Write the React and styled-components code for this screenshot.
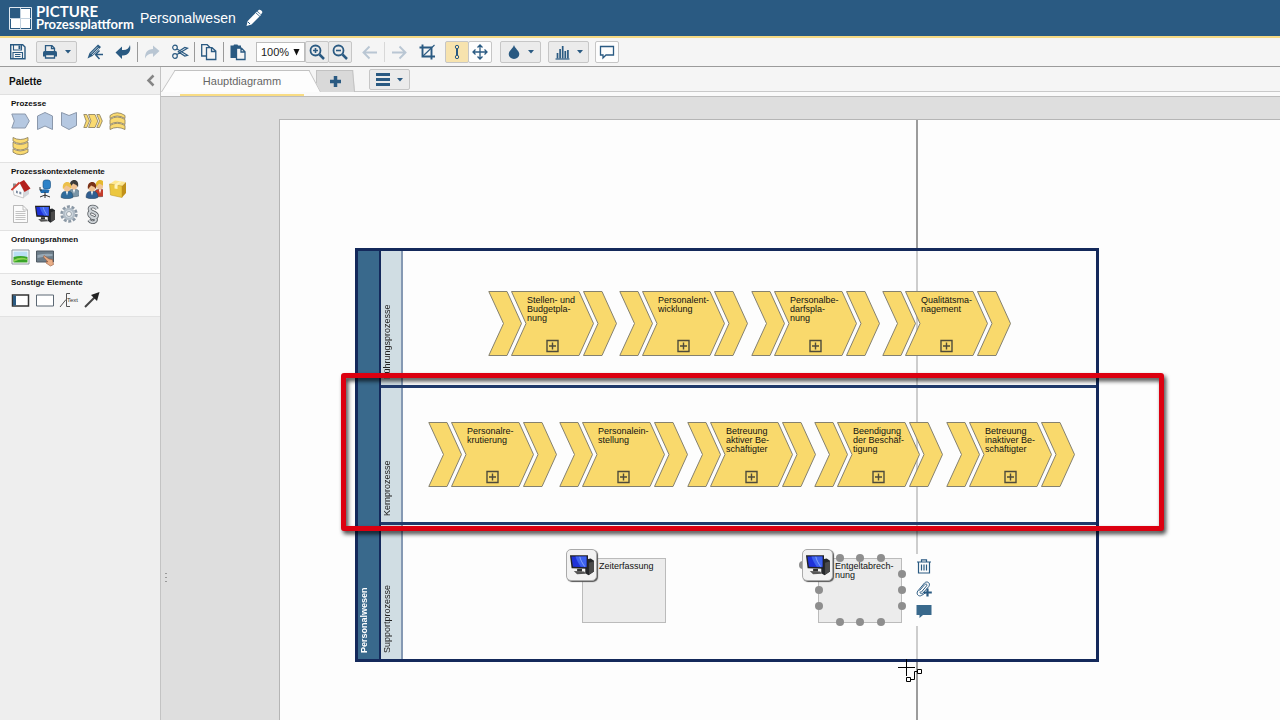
import React from "react";
import styled, { createGlobalStyle } from "styled-components";

const blue = "#2a5a82";
const navy = "#14295b";

const GlobalStyle = createGlobalStyle`
  * { box-sizing: border-box; }
  body { margin: 0; font-family: "Liberation Sans", Arial, sans-serif; color: #111; }
  button, select { font-family: inherit; }
`;

const Page = styled.div`
  display: flex;
  flex-direction: column;
  min-height: 100vh;
  overflow: hidden;
  background: #dedede;
`;

/* ---------- header ---------- */
const Header = styled.header`
  display: flex;
  align-items: center;
  height: 38px;
  padding: 0 9px;
  background: ${blue};
  border-bottom: 2px solid #f6da83;
  color: #fff;
`;
const Brand = styled.a`
  display: flex;
  align-items: center;
  gap: 4px;
  width: 131px;
  color: #fff;
  text-decoration: none;
  font-family: Lato, "Liberation Sans", sans-serif;
  font-weight: 700;
  white-space: nowrap;
`;
const BrandText = styled.span`
  display: flex;
  flex-direction: column;
`;
const BrandName = styled.span`
  font-size: 15px;
  line-height: 13px;
`;
const BrandSub = styled.span`
  font-size: 13px;
  line-height: 13px;
`;
const Title = styled.h1`
  margin: 0;
  font-size: 14px;
  line-height: 16px;
  font-weight: 400;
`;
const EditButton = styled.button`
  display: flex;
  margin-left: 8px;
  padding: 0;
  border: 0;
  background: none;
  color: #fff;
`;

/* ---------- toolbar ---------- */
const Toolbar = styled.nav`
  display: flex;
  align-items: center;
  gap: 4px;
  height: 29px;
  padding: 0 4px;
  background: #f5f5f5;
  border-bottom: 1px solid #9b9b9b;
`;
const Group = styled.div`
  display: flex;
  align-items: center;
`;
const WideGroup = styled(Group)`
  gap: 7px;
  margin-left: 4px;
`;
const ToolButton = styled.button`
  display: flex;
  align-items: center;
  justify-content: center;
  width: 28px;
  height: 22px;
  padding: 0;
  border: 0;
  background: none;
  color: ${(p) => (p.disabled ? "#b9c6d3" : blue)};
`;
const BoxButton = styled(ToolButton)`
  width: 24px;
  border: 1px solid #c6c6c6;
  border-radius: 2px;
  background: ${(p) => (p.$tone === "active" ? "#f7e3ae" : p.$tone === "light" ? "#fdfdfd" : "#ebebeb")};
  & + & { margin-left: -1px; }
`;
const DropButton = styled(BoxButton)`
  width: 41px;
  gap: 7px;
  & + & { margin-left: 0; }
`;
const Separator = styled.span`
  width: 1px;
  height: 20px;
  background: ${(p) => (p.$faint ? "#d8d8d8" : "#9a9a9a")};
`;
const ZoomLabel = styled.label`
  display: grid;
  align-items: center;
  width: 49px;
  height: 20px;
  border: 1px solid #bdbdbd;
  background: #fff;
  font-size: 11px;
  svg { grid-area: 1 / 1; justify-self: end; margin-right: 4px; pointer-events: none; }
`;
const ZoomSelect = styled.select`
  grid-area: 1 / 1;
  width: 100%;
  height: 18px;
  padding: 0 4px;
  border: 0;
  background: none;
  appearance: none;
  font-size: 11px;
  color: #222;
`;

/* ---------- body ---------- */
const Body = styled.div`
  display: flex;
  flex: 1;
`;
const Sidebar = styled.aside`
  flex: none;
  width: 161px;
  background: #eee;
  border-right: 1px solid #c3c3c3;
`;
const PaletteHeader = styled.div`
  display: flex;
  align-items: center;
  justify-content: space-between;
  height: 28px;
  padding: 0 5px 0 9px;
  border-bottom: 1px solid #e0e0e0;
  background: #f0f0f0;
`;
const PaletteTitle = styled.h2`
  margin: 0;
  padding-top: 2px;
  font-size: 10px;
  line-height: 12px;
`;
const PlainButton = styled.button`
  display: flex;
  align-items: center;
  justify-content: center;
  padding: 0;
  border: 0;
  background: none;
  color: ${blue};
`;
const Section = styled.section`
  padding: 5px 9px 4px;
  border-bottom: 1px solid #e2e2e2;
  background: ${(p) => (p.$shade ? "#f7f7f7" : "#fdfdfd")};
`;
const SectionTitle = styled.h3`
  margin: 0 2px;
  font-size: 8px;
  line-height: 8px;
`;
const IconGrid = styled.div`
  display: grid;
  grid-template-columns: repeat(5, 24px);
  grid-auto-rows: 25px;
`;

const Main = styled.main`
  display: flex;
  flex-direction: column;
  flex: 1;
  min-width: 0;
`;
const TabBar = styled.div`
  display: flex;
  height: 30px;
  padding-top: 3px;
  border-bottom: 1px solid #bcbcbc;
  background: linear-gradient(#f5f5f5 24px, #c9c9c9 24px, #c9c9c9 25px, #fafafa 25px);
`;
const Tab = styled.button`
  position: relative;
  z-index: 1;
  width: 160px;
  height: 26px;
  padding: 0 0 3px;
  border: 0;
  background: none;
  font-size: 11px;
  color: #666;
  &::before, &::after {
    content: "";
    position: absolute;
    z-index: -1;
    top: 0;
    bottom: 4px;
    width: 55%;
    border-top: 1px solid #c2c2c2;
    background: #fdfdfd;
  }
  &::before {
    left: 0;
    border-left: 1px solid #c2c2c2;
    transform: skewX(-32deg);
    transform-origin: bottom;
  }
  &::after {
    right: 0;
    border-right: 1px solid #c2c2c2;
    transform: skewX(28deg);
    transform-origin: bottom;
  }
`;
const TabLabel = styled.span`
  display: block;
  margin: 0 17px 0 19px;
  height: 26px;
  line-height: 23px;
  border-bottom: 2px solid #f8dc84;
`;
const AddTab = styled(Tab)`
  z-index: 0;
  display: flex;
  justify-content: center;
  align-items: center;
  width: 39px;
  height: 22px;
  margin-left: -5px;
  padding: 0;
  color: ${blue};
  &::before, &::after { background: #d9d9d9; bottom: 0; }
  &::before { transform: none; }
  &::after { transform: skewX(5deg); }
`;
const TabMenu = styled(DropButton)`
  height: 21px;
  margin: -1px 0 0 14px;
`;

const Canvas = styled.div`
  position: relative;
  display: flex;
  flex: 1;
  padding: 22px 0 0 118px;
  background: #dedede;
  overflow: hidden;
`;
const Splitter = styled.div`
  position: absolute;
  left: 4px;
  top: 476px;
  width: 2px;
  height: 12px;
  background: repeating-linear-gradient(#999 0 1px, transparent 1px 4px);
`;
const Sheet = styled.div`
  position: relative;
  flex: 1;
  min-height: 601px;
  border: solid #b5b5b5;
  border-width: 1px 0 0 1px;
  background: #fdfdfd;
`;
const Guide = styled.div`
  position: absolute;
  left: 636px;
  top: 0;
  bottom: 0;
  width: 2px;
  background: #9c9c9c;
`;
const Pool = styled.div`
  position: absolute;
  left: 75px;
  top: 128px;
  display: flex;
  width: 744px;
  height: 414px;
  border: 3px solid ${navy};
  background: rgba(253, 253, 253, 0.5);
`;
const VerticalLabel = styled.div`
  writing-mode: vertical-rl;
  transform: rotate(180deg);
  padding-top: 6px;
  font-size: 9px;
  line-height: 13px;
  white-space: nowrap;
`;
const PoolHeader = styled(VerticalLabel)`
  width: 23px;
  border-left: 2px solid ${navy};
  background: #39698c;
  color: #fff;
  font-weight: 700;
`;
const Lanes = styled.div`
  display: grid;
  grid-template-rows: 134px 137px 1fr;
  flex: 1;
`;
const Lane = styled.div`
  display: flex;
  & + & { border-top: 3px solid #203a6b; }
`;
const LaneHeader = styled(VerticalLabel)`
  width: 22px;
  border-left: 2px solid #8599b3;
  background: #d0dde3;
  color: #222;
`;
const ProcessNode = styled.div`
  position: absolute;
  display: grid;
  left: ${(p) => p.$x}px;
  top: ${(p) => p.$y}px;
  width: 129px;
  height: 66px;
  svg, span { grid-area: 1 / 1; }
`;
const NodeText = styled.span`
  position: relative;
  padding: 5px 0 0 39px;
  font-size: 9px;
  line-height: 9px;
  white-space: pre;
`;
const Resource = styled.div`
  position: absolute;
  left: ${(p) => p.$x}px;
  top: 438px;
  width: 84px;
  height: 65px;
  padding: 3px 0 0 16px;
  border: 1px solid #bbb;
  background: #ececec;
  font-size: 9px;
  line-height: 9px;
  white-space: pre;
`;
const Badge = styled.span`
  position: absolute;
  left: -17px;
  top: -10px;
  display: flex;
  align-items: center;
  justify-content: center;
  width: 31px;
  height: 32px;
  border: 1px solid #aaa;
  border-radius: 5px;
  background: #f2f2f2;
  box-shadow: 1px 1px 1px #555;
`;
const Handle = styled.i`
  position: absolute;
  left: ${(p) => p.$x - 5}px;
  top: ${(p) => p.$y - 6}px;
  width: 8px;
  height: 8px;
  border-radius: 50%;
  background: #8e8e8e;
`;
const ContextBar = styled.div`
  position: absolute;
  left: 635px;
  top: 434px;
  display: flex;
  flex-direction: column;
  align-items: center;
  gap: 7px;
  width: 18px;
  height: 72px;
  padding-top: 4px;
  background: #fdfdfd;
`;
const Highlight = styled.div`
  position: absolute;
  left: 61px;
  top: 253px;
  width: 823px;
  height: 158px;
  border: 5px solid #dc0010;
  border-radius: 3px;
  filter: drop-shadow(2px 3px 2px rgba(0, 0, 0, 0.75));
  pointer-events: none;
`;
const Cursor = styled.svg`
  position: absolute;
  left: 618px;
  top: 539px;
`;

/* ---------- icons ---------- */
const Icon = ({ size = 18, box = 18, children, ...rest }) => (
  <svg width={size} height={size} viewBox={`0 0 ${box} ${box}`} fill="none" stroke="currentColor" strokeWidth="1.4" aria-hidden="true" {...rest}>
    {children}
  </svg>
);
const Caret = () => (
  <svg width="6" height="4" viewBox="0 0 6 4" aria-hidden="true"><path d="M0 0h6L3 3.5z" fill={blue} /></svg>
);

const Save = () => (
  <Icon><path d="M1.700 1.700h12L16 4v11.800H1.700z" /><path d="M4.500 2v5h8V2M4 15.500v-6h9.500v6M6 11.500h5.500M6 13.500h5.500" strokeWidth="1.100" /><path d="M9.500 2.500h2v3.500h-2z" fill="currentColor" stroke="none" /></Icon>
);
const Printer = () => (
  <Icon size={16} box={16} strokeWidth="1.300"><path d="M3.500 7.500V1.700h6.500l2.500 2.500v3.300M9.500 2v2.700h3" /><path d="M1 8.500q0-1.500 1.500-1.500h11q1.500 0 1.500 1.500V12.500H1z" fill="currentColor" stroke="none" /><path d="M3.500 10.500h9V14h-9z" fill="#ebebeb" /></Icon>
);
const PenArrow = () => (
  <Icon><path d="M1.500 15.500l2-5.500L12 1.500 15 4 6.500 13z" fill="currentColor" stroke="none" /><path d="M4.800 10.800l7-7M6 12l7-7" stroke="#f5f5f5" strokeWidth="0.700" /><path d="M17 11.500H10M13.500 7.500L9.500 11.500l4 4.500" strokeWidth="1.500" /></Icon>
);
const Undo = () => (
  <Icon><path d="M1.500 9.500L8 3.500v3.500c4.500.5 7-1.500 8-5 1.500 6.500-2 11-8 10.500V16z" fill="currentColor" stroke="none" /></Icon>
);
const Redo = () => (
  <Icon><path d="M16.500 8L10 2.500V6C4.500 6 2 9.500 2 15.500c1.500-3.500 4-5 8-5V14z" fill="currentColor" stroke="none" /></Icon>
);
const Cut = () => (
  <Icon strokeWidth="1.200"><circle cx="4" cy="4.500" r="2.300" /><circle cx="4" cy="13" r="2.300" /><path d="M6 6l10.500 6.300-2.700.7-7-4.500M6 11.500L16.500 5.200 13.800 4.500l-7 4.500" /></Icon>
);
const Copy = () => (
  <Icon strokeWidth="1.300"><path d="M6.500 13H1.700V1.700h5.500L10 4.500" /><path d="M6.500 4.700h5.500L15.800 8v8.500H6.500zM11.500 4.700V8.500h4.300" fill="#f5f5f5" /></Icon>
);
const Paste = () => (
  <Icon strokeWidth="1.300"><path d="M1.500 2.500h3l.5-1h3.500l.5 1h3v12.500H1.500z" fill="currentColor" stroke="none" /><path d="M7.500 5.200h5L16 8.700v7.800H7.500zM12 5.200v3.800h4" fill="#f5f5f5" /></Icon>
);
const Loupe = ({ plus }) => (
  <Icon><circle cx="7.500" cy="7.500" r="5" strokeWidth="1.800" /><path d="M11.500 11.500L16 16" strokeWidth="2.500" /><path d={plus ? "M5 7.500h5M7.500 5v5" : "M5 7.500h5"} strokeWidth="1.600" /></Icon>
);
const Arrow = ({ right }) => (
  <Icon strokeWidth="1.900"><path d={right ? "M2 9.500h13M9.500 3.500L15.500 9.500l-6 6" : "M16 9.500H3M8.500 3.500L2.500 9.500l6 6"} /></Icon>
);
const Crop = () => (
  <Icon><path d="M4.500 1.500V13.500H17M1.500 4.500h12V16.500" strokeWidth="1.900" /><path d="M4.500 13.500L16.500 2" strokeWidth="1.100" /></Icon>
);
const Connector = () => (
  <Icon strokeWidth="1"><circle cx="9" cy="4" r="1.700" /><circle cx="9" cy="14" r="1.700" /><path d="M8.500 5.500v7M9.500 5.500v7" /></Icon>
);
const Move = () => (
  <Icon strokeWidth="1.300"><path d="M9 2.500v13M2.500 9h13M6.500 4.500L9 2l2.500 2.500M6.500 13.500L9 16l2.500-2.500M4.500 6.500L2 9l2.500 2.500M13.500 6.500L16 9l-2.500 2.500" /></Icon>
);
const Drop = () => (
  <Icon size={14} box={14}><path d="M7 0C8 3.500 12.300 6 12.300 9a5.300 5 0 0 1-10.600 0C1.700 6 6 3.500 7 0z" fill="currentColor" stroke="none" /></Icon>
);
const Chart = () => (
  <Icon size={15} box={15}><path d="M.5 14h14" strokeWidth="1.200" /><path d="M2.500 13.500V8M5.100 13.500V4M7.700 13.500V1M10.300 13.500V6M12.900 13.500V5" strokeWidth="1.700" /></Icon>
);
const Comment = () => (
  <Icon strokeWidth="1.300"><path d="M2.500 3.500h13v8.500H8l-3 3v-3H2.500z" /></Icon>
);
const Monitor = ({ size = 22 }) => (
  <svg width={size} height={size} viewBox="0 0 22 22" aria-hidden="true">
    <path d="M14 6l5-1 3 2v10l-5 3.500-3-2z" fill="#25272a" /><path d="M17.500 9L22 7.500V17l-4.500 3z" fill="#4a4a4a" />
    <path d="M0 2h16.500v12.500L1.500 14z" fill="#222" /><path d="M1.300 3.200h13.900v9.800l-12.500-.5z" fill="#1f32d8" />
    <path d="M5 3.200c1 3.500 3 6.500 5 9.500h5V3.200z" fill="#3e63ef" /><path d="M9 3.500c.5 3 2.500 6 4.500 9" stroke="#a8c1ff" strokeWidth=".6" fill="none" />
    <path d="M6.500 14.500h4.500V17h-4.500z" fill="#333" /><path d="M3.500 16.500l9.500.5 1.500 2-8 .5z" fill="#555" />
  </svg>
);

const PIcon = ({ children }) => (
  <svg width="20" height="20" viewBox="0 0 20 20" fill="none" aria-hidden="true">{children}</svg>
);
const pale = { fill: "#b5c8e1", stroke: "#8b98ab", strokeWidth: 1 };
const gold = { fill: "#fada70", stroke: "#857a5a", strokeWidth: 0.8 };

const Person = ({ x, hair, coat, y = 0 }) => (
  <g transform={`translate(${x} ${y})`}>
    <path d="M-1 15.500c0-4.500 2-6.500 6-6.500s6 2 6 6.500c-3 1.700-9 1.700-12 0z" fill={coat} stroke="#23384a" strokeWidth=".4" />
    <path d="M3.800 9.200L5 13.500l1.200-4.300z" fill="#fff" />
    <ellipse cx="5" cy="5.500" rx="3.300" ry="4" fill="#f0c394" />
    <path d="M1 7.500C0 2 2.500 0 5.200 0S10 2 9 7.500C8 4.500 6 4.500 4 3.500 3.300 5 2 5.500 1 7.500z" fill={hair} />
  </g>
);

const sectionSign = "M14 5C12.500 1.500 6.500 1.800 6.500 5s7.500 3 7.500 6.200-4 4-6 2M8.300 7.300c-3 1-3 4.500.7 5.700 3 1 5 2 3.500 4.200-1.500 1.800-5 1.300-6.500-1.200";

const sections = [
  { title: "Prozesse", items: [
    ["Prozess rechts", <path d="M.8 3h13.500l4 7-4 7H.8l2.500-7z" {...pale} />],
    ["Prozess oben", <path d="M2.500 18.500V5L10 1.500 17.500 5v13.500L10 15z" {...pale} />],
    ["Prozess unten", <path d="M2.500 1.500L10 4.500l7.500-3V14.500L10 18.500l-7.500-4z" {...pale} />],
    ["Prozesskette rechts", <g {...gold}><path d="M.8 3.500h3L6.500 10l-2.700 6.500h-3L3.200 10z" /><path d="M5.500 3.500h6.500L14.800 10 12 16.500H5.500L8 10z" /><path d="M13.800 3.500h2.700L19.300 10l-2.800 6.500h-2.700L16.500 10z" /></g>],
    ["Prozesskette oben", <g {...gold}><path d="M3 4.500q7-5.500 15 0v3q-8-5-15 0z" /><path d="M3 8.500q7-5 15 0v5q-8-4.500-15 0z" /><path d="M3 14.500q7-4.500 15 0v4q-8-4-15 0z" /></g>],
    ["Prozesskette unten", <g {...gold}><path d="M2 1.500q7 4 15 0v3.500q-8 5-15 0z" /><path d="M2 6.200q7 4.500 15 0v5.300q-8 5-15 0z" /><path d="M2 12.700q7 4.500 15 0v3.500q-8 5-15 0z" /></g>],
  ]},
  { title: "Prozesskontextelemente", items: [
    ["Organisation", <g><path d="M2 9.500h3V4.500h-3z" fill="#8e8e8e" /><path d="M2 10L9 4l4 8-.5 7L3 16z" fill="#fbfbfb" stroke="#999" strokeWidth=".5" /><path d="M13 12l5-3v6l-5.500 4z" fill="#d4d7db" /><path d="M8.500 3.500L13 1l6.500 8.500-6 3.500z" fill="#b3201d" /><path d="M.5 11L8.500 3.500" stroke="#cf3a30" strokeWidth="1.800" /><path d="M5 11.500l1.800.6v2.500L5 14zM8.300 12.500l2 .6v2.500l-2-.6z" fill="#7c8ba0" /></g>],
    ["Stelle", <g><rect x="8" y="1" width="7.500" height="9" rx="2.500" fill="#2d82c8" stroke="#174d7e" strokeWidth=".6" /><path d="M4.500 11q5-1.500 10 0l-1 3H6z" fill="#216db0" /><path d="M10 13v4M5 18l5-2 5 2M10 16v3M5 8v3h2" stroke="#333" /></g>],
    ["Gruppe", <g><Person x={10} y={1} hair="#3b3b3b" coat="#7b95a6" /><Person x={3} y={3} hair="#ecc04a" coat="#2f6b9b" /></g>],
    ["Beteiligte", <g><Person x={12} y={1} hair="#e5b82f" coat="#c33c2c" /><Person x={4} y={3} hair="#7a3218" coat="#315f92" /></g>],
    ["Produkt", <g><path d="M2.500 5L8 1.500 18.500 3l-3.500 4z" fill="#ffe88f" /><path d="M2.500 5L15 7v11.500L3.500 16z" fill="#ecc73f" stroke="#b8901c" strokeWidth=".5" /><path d="M15 7l4-4v11l-4 4.500z" fill="#c1911a" /><path d="M7.500 5.800L12.500 2.200l2.500.3-4.500 4v3.500L7.500 9.500z" fill="#fff3b8" /></g>],
    ["Dokument", <g><path d="M2.500 1.500h9.500L16.500 6v12.500h-14z" fill="#fbfbfb" stroke="#aaa" strokeWidth=".8" /><path d="M12 1.500v4.500h4.500M4.500 7.500h10M4.500 9.500h10M4.500 11.500h10M4.500 13.500h10M4.500 15.500h10" stroke="#aaa" strokeWidth=".7" /></g>],
    ["System", <Monitor size={20} />],
    ["Aufgabe", <g><circle cx="10" cy="10" r="7.200" stroke="#8b98a5" strokeWidth="3" strokeDasharray="2.900 1.625" /><circle cx="10" cy="10" r="5" fill="#d8dfe5" stroke="#b3bec8" strokeWidth="2.500" /><circle cx="10" cy="10" r="2.500" fill="#f7f7f7" stroke="#8995a0" strokeWidth=".8" /></g>],
    ["Vorschrift", <g><path d={sectionSign} stroke="#575c61" strokeWidth="3.600" /><path d={sectionSign} stroke="#cfd4d8" strokeWidth="2" /></g>],
  ]},
  { title: "Ordnungsrahmen", items: [
    ["Bild", <g><path d="M1 3h17v14H1z" fill="#fff" stroke="#8b949d" /><path d="M2.500 4.500h14v6h-14z" fill="#b9dff5" /><path d="M2.500 10q7-2 14 0v5.500h-14z" fill="#39a428" /><path d="M2.500 13q7-4 14-1v1q-7-1.500-14 2z" fill="#8ed354" /></g>],
    ["Aktives Bild", <g><path d="M1.500 4h17v11h-17z" fill="#6d7d89" stroke="#505b64" /><path d="M2.500 8q8-2 15-1v2q-7 0-15 2z" fill="#97a8b5" /><path d="M9 8.500l5 3.500 3.500.5 1 5-3 1.500-4.500-3 .5-1.500 1.500.5-4.500-5z" fill="#e9ae86" stroke="#94583b" strokeWidth=".6" /></g>],
  ]},
  { title: "Sonstige Elemente", items: [
    ["Pool", <g><path d="M1.500 5h16v11h-16z" fill="#fff" stroke="#333" strokeWidth="1.500" /><path d="M2 5.500h3v10H2z" fill="#2a5a82" /></g>],
    ["Rahmen", <path d="M1.500 5h17v11h-17z" fill="#fff" stroke="#5c6874" />],
    ["Text", <g><path d="M1 17L7 9.500M11 3.500H7.500v13H11" stroke="#555" /><text x="8" y="12" fontSize="6" fill="#333" fontFamily="Liberation Sans">Text</text></g>],
    ["Verbindung", <g><path d="M2 17L12 7" stroke="#444" strokeWidth="2" /><path d="M8 5l8.500-3L14 11z" fill="#222" /></g>],
  ]},
];

const processes = [
  { x: 208, y: 171, text: "Stellen- und\nBudgetpla-\nnung" },
  { x: 339, y: 171, text: "Personalent-\nwicklung" },
  { x: 471, y: 171, text: "Personalbe-\ndarfspla-\nnung" },
  { x: 602, y: 171, text: "Qualitätsma-\nnagement" },
  { x: 148, y: 302, text: "Personalre-\nkrutierung" },
  { x: 279, y: 302, text: "Personalein-\nstellung" },
  { x: 407, y: 302, text: "Betreuung\naktiver Be-\nschäftigter" },
  { x: 534, y: 302, text: "Beendigung\nder Beschäf-\ntigung" },
  { x: 666, y: 302, text: "Betreuung\ninaktiver Be-\nschäftigter" },
];

const handles = [[-15, 8], [22, 1], [42, 1], [63, 1], [84, 17], [84, 33], [84, 49], [22, 65], [42, 65], [63, 65], [1, 33], [1, 49]];

const Process = ({ x, y, text }) => (
  <ProcessNode $x={x} $y={y}>
    <svg width="129" height="66" viewBox="0 0 129 66" fill="#f9d96c" stroke="#85816f" strokeWidth="1" aria-hidden="true">
      <path d="M.8 .5h18.200L33.500 32.500 19 64.500H.8L15.500 32.500z" />
      <path d="M23.500 .5h67.500L105.500 32.500 91 64.500H23.500L38 32.500z" />
      <path d="M95.500 .5h18.500L128.500 32.500 114 64.500H95.500L110 32.500z" />
      <path d="M59 49.500h11v11h-11zM64.500 51.500v7M61 55h7" stroke="#4f4b3a" strokeWidth="1.400" fill="none" />
    </svg>
    <NodeText>{text}</NodeText>
  </ProcessNode>
);

export default function App() {
  return (
    <Page>
      <GlobalStyle />
      <Header>
        <Brand href="#">
          <svg width="23" height="23" viewBox="0 0 23 23" aria-hidden="true">
            <path d="M.5.5h22v22H.5z" fill={blue} stroke="#dfe8f0" /><path d="M12 2h9v9h-9zM2 12h9v9H2zM12 12h9v9h-9z" fill="#fff" />
            <path d="M11.500 1v21M1 11.500h21" stroke="#c3d2df" />
          </svg>
          <BrandText><BrandName>PICTURE</BrandName><BrandSub>Prozessplattform</BrandSub></BrandText>
        </Brand>
        <Title>Personalwesen</Title>
        <EditButton aria-label="Umbenennen">
          <Icon size={20} box={20}><path d="M2.500 18l1.200-5L13 3.500l4 3.500-9.500 9.500z" fill="#fff" stroke="none" /><path d="M13.500 3l1.500-1.200q1-.5 2 .5l1 1q.8 1 0 1.800L17 6.500z" fill="#fff" stroke="none" /><path d="M12 5l4 3.500" stroke={blue} strokeWidth=".8" /><path d="M4 14l2 2" stroke={blue} strokeWidth="1" /></Icon>
        </EditButton>
      </Header>

      <Toolbar aria-label="Werkzeuge">
        <ToolButton aria-label="Speichern"><Save /></ToolButton>
        <DropButton aria-label="Drucken"><Printer /><Caret /></DropButton>
        <Group>
          <ToolButton aria-label="Format"><PenArrow /></ToolButton>
          <ToolButton aria-label="Rückgängig"><Undo /></ToolButton>
          <Separator />
          <ToolButton aria-label="Wiederholen" disabled><Redo /></ToolButton>
          <ToolButton aria-label="Ausschneiden"><Cut /></ToolButton>
          <Separator />
          <ToolButton aria-label="Kopieren"><Copy /></ToolButton>
          <Separator />
          <ToolButton aria-label="Einfügen"><Paste /></ToolButton>
        </Group>
        <Group>
          <ZoomLabel>
            <ZoomSelect aria-label="Zoom" defaultValue="100%"><option>100%</option></ZoomSelect>
            <svg width="7" height="7" viewBox="0 0 7 7" aria-hidden="true"><path d="M.5 0h6L3.500 6.500z" fill="#111" /></svg>
          </ZoomLabel>
          <BoxButton aria-label="Vergrößern"><Loupe plus /></BoxButton>
          <BoxButton aria-label="Verkleinern"><Loupe /></BoxButton>
        </Group>
        <Group>
          <ToolButton aria-label="Zurück" disabled><Arrow /></ToolButton>
          <Separator $faint />
          <ToolButton aria-label="Vor" disabled><Arrow right /></ToolButton>
          <ToolButton aria-label="Zuschneiden"><Crop /></ToolButton>
        </Group>
        <Group>
          <BoxButton $tone="active" aria-label="Verbinden"><Connector /></BoxButton>
          <BoxButton $tone="light" aria-label="Verschieben"><Move /></BoxButton>
        </Group>
        <WideGroup>
          <DropButton aria-label="Farbe"><Drop /><Caret /></DropButton>
          <DropButton aria-label="Auswertung"><Chart /><Caret /></DropButton>
          <BoxButton $tone="light" aria-label="Kommentar"><Comment /></BoxButton>
        </WideGroup>
      </Toolbar>

      <Body>
        <Sidebar>
          <PaletteHeader>
            <PaletteTitle>Palette</PaletteTitle>
            <PlainButton aria-label="Einklappen">
              <svg width="9" height="13" viewBox="0 0 9 13" aria-hidden="true"><path d="M7.500 1.500l-5 5 5 5" fill="none" stroke="#858585" strokeWidth="2.500" /></svg>
            </PlainButton>
          </PaletteHeader>
          {sections.map((s, i) => (
            <Section key={s.title} $shade={i % 2 === 1}>
              <SectionTitle>{s.title}</SectionTitle>
              <IconGrid>
                {s.items.map(([name, art]) => (
                  <PlainButton key={name} aria-label={name}><PIcon>{art}</PIcon></PlainButton>
                ))}
              </IconGrid>
            </Section>
          ))}
        </Sidebar>

        <Main>
          <TabBar>
            <Tab><TabLabel>Hauptdiagramm</TabLabel></Tab>
            <AddTab aria-label="Neues Diagramm">
              <svg width="11" height="11" viewBox="0 0 11 11" aria-hidden="true"><path d="M5.500 0v11M0 5.500h11" stroke={blue} strokeWidth="3.500" /></svg>
            </AddTab>
            <TabMenu aria-label="Diagrammliste">
              <svg width="14" height="13" viewBox="0 0 14 13" aria-hidden="true"><path d="M0 1.500h14M0 6.500h14M0 11.500h14" stroke={blue} strokeWidth="3" /></svg>
              <Caret />
            </TabMenu>
          </TabBar>
          <Canvas>
            <Splitter />
            <Sheet>
              <Guide />
              <Pool>
                <PoolHeader>Personalwesen</PoolHeader>
                <Lanes>
                  {["Führungsprozesse", "Kernprozesse", "Supportprozesse"].map((name) => (
                    <Lane key={name}><LaneHeader>{name}</LaneHeader></Lane>
                  ))}
                </Lanes>
              </Pool>
              {processes.map((p) => <Process key={p.x} {...p} />)}
              <Resource $x={302}><Badge><Monitor size={24} /></Badge>Zeiterfassung</Resource>
              <Resource $x={538}>
                {handles.map(([x, y]) => <Handle key={`${x}-${y}`} $x={x} $y={y} />)}
                <Badge><Monitor size={24} /></Badge>{"Entgeltabrech-\nnung"}
              </Resource>
              <ContextBar>
                <PlainButton aria-label="Löschen">
                  <Icon size={16} box={16} strokeWidth="1.200"><path d="M1 4h14M5.500 4V1.800h5V4M2.500 4v11h11V4M5.500 6.500v6M8 6.500v6M10.500 6.500v6" /></Icon>
                </PlainButton>
                <PlainButton aria-label="Anhängen">
                  <Icon size={16} box={16} strokeWidth="1"><path d="M5 11.500l5.500-6.500c1.300-1.300-.3-2.700-1.700-1.500L3.500 9.500M10 11.500L5.500 14.500c-3 1.500-5.700-1.500-3.700-4.500L8.500 2C11-.5 15 2 12.800 5.500L7 12c-1.500 1.500-3.500.5-2.700-1.500" /><path d="M11.500 7.500v8M7.800 11.500h8" strokeWidth="2.200" /></Icon>
                </PlainButton>
                <PlainButton aria-label="Kommentieren">
                  <Icon size={16} box={16}><path d="M.5 1h15v10H7l-3.500 3v-3h-3z" fill="#39698c" stroke="none" /></Icon>
                </PlainButton>
              </ContextBar>
              <Highlight />
              <Cursor width="26" height="24" viewBox="0 0 26 24" fill="none" stroke="#000" aria-hidden="true">
                <path d="M0 8.500h17M8.500 0v17" /><path d="M12.500 20.500h4v-8h4" /><path d="M8.500 18.500h4v4h-4zM19.500 10.500h4v4h-4z" fill="#fff" />
              </Cursor>
            </Sheet>
          </Canvas>
        </Main>
      </Body>
    </Page>
  );
}
